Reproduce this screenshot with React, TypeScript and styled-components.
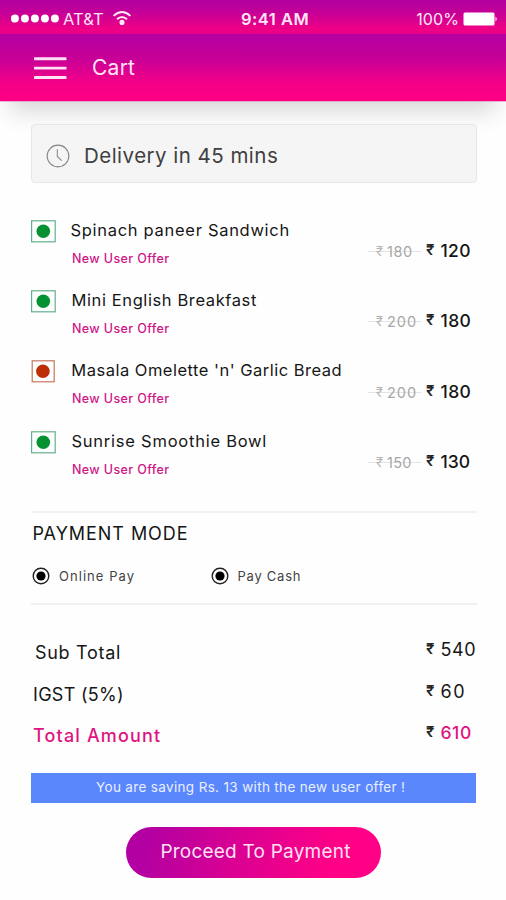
import React from "react";
import styled, { createGlobalStyle } from "styled-components";

const GlobalStyle = createGlobalStyle`
  *, *::before, *::after { box-sizing: border-box; }
  body {
    margin: 0;
    background: #fefefe;
    color: #161616;
    font-family: Inter, "Open Sans", sans-serif;
  }
`;

const Screen = styled.div`
  width: 506px;
  height: 900px;
  overflow: hidden;
  display: flex;
  flex-direction: column;
`;

/* One line of text: size, weight, tracking and an optional nudge to the right. */
const Label = styled.span<{ $size: number; $track?: number; $weight?: number; $color?: string; $indent?: number }>`
  font-size: ${(p) => p.$size}px;
  letter-spacing: ${(p) => p.$track ?? 0}px;
  font-weight: ${(p) => p.$weight ?? 400};
  color: ${(p) => p.$color ?? "inherit"};
  margin-left: ${(p) => p.$indent ?? 0}px;
  line-height: 24px;
  white-space: nowrap;
`;

const StatusBar = styled.div`
  height: 34px;
  flex: none;
  display: grid;
  grid-template-columns: 241px 1fr auto;
  align-items: center;
  padding: 4px 8px 0 0;
  color: #ffe6f6;
  background: linear-gradient(#b1009f 0%, #c40098 35%, #ee0085 85%, #e90086 100%);
`;

const Carrier = styled.div`
  display: flex;
  align-items: center;
  padding-left: 11px;
`;

const WifiIcon = styled.svg`
  width: 20px;
  height: 16px;
  margin: -2px 0 0 8px;
`;

const Battery = styled.div`
  display: flex;
  align-items: center;
  gap: 4px;
`;

const Header = styled.header`
  height: 67px;
  flex: none;
  display: flex;
  align-items: center;
  gap: 25px;
  padding-left: 34px;
  color: #ffe4f5;
  background: linear-gradient(#b400a1 0%, #c60098 35%, #f50087 75%, #ff0084 100%);
  box-shadow: 0 1px 0 rgba(235, 120, 185, 0.55), 0 20px 24px -10px rgba(0, 0, 0, 0.16);
  clip-path: inset(0 0 -60px 0);
`;

const Body = styled.main`
  display: flex;
  flex-direction: column;
  padding: 23px 30px 0 31px;
  position: relative;
`;

const DeliveryCard = styled.section`
  height: 59px;
  width: 446px;
  display: flex;
  align-items: center;
  gap: 14px;
  padding: 4px 0 0 14px;
  border: 1px solid #e6e7e7;
  border-radius: 4px;
  background: #f5f5f5;
`;

const ItemList = styled.ul`
  list-style: none;
  margin: 34.5px 0 12px;
  padding: 0;
  display: grid;
  grid-auto-rows: 70.4px;
`;

const Item = styled.li`
  display: grid;
  grid-template-columns: 40px 297px 58px 1fr;
  align-items: start;
`;

const FoodMark = styled.svg`
  width: 26px;
  height: 24px;
  margin-top: 2px;
`;

const ItemText = styled.div`
  display: flex;
  flex-direction: column;
  gap: 5px;
`;

const OldPrice = styled.div`
  display: flex;
  align-items: center;
  height: 24px;
  width: 53px;
  margin-top: 22.5px;
  padding-left: 8px;
  color: #a6a6a6;
  background: linear-gradient(#e4e4e4, #e4e4e4) 0 11px / 100% 1px no-repeat;
`;

const Price = styled.div`
  display: flex;
  align-items: center;
  margin-top: 21.5px;
`;

const RupeeSign = styled.span<{ $small?: boolean }>`
  width: ${(p) => (p.$small ? 11 : 14.5)}px;
  font-size: ${(p) => (p.$small ? 13 : 15)}px;
  font-weight: ${(p) => (p.$small ? 400 : 600)};
  line-height: 22px;
  padding-bottom: 2px;
  color: ${(p) => (p.$small ? "#b5b5b5" : "#252525")};
`;

const Divider = styled.hr`
  width: 446px;
  height: 2px;
  margin: 0;
  border: 0;
  background: #f1f1f1;
`;

const Payment = styled.section`
  height: 90px;
  display: flex;
  flex-direction: column;
  gap: 18.5px;
  padding: 8.5px 0 0 1px;
`;

const Options = styled.div`
  display: grid;
  grid-template-columns: 178.5px 1fr;
`;

const Option = styled.label`
  display: flex;
  align-items: center;
  gap: 9px;
`;

const Totals = styled.dl`
  margin: 0;
  padding: 32.9px 0 0 2px;
  display: grid;
  grid-auto-rows: 41.6px;
`;

const TotalRow = styled.div`
  display: grid;
  grid-template-columns: 393px 1fr;
  align-items: start;
`;

const Term = styled.dt`
  padding-top: 3.3px;
`;

const Amount = styled.dd`
  margin: 0;
  display: flex;
  align-items: center;
`;

const Saving = styled.p`
  width: 445px;
  height: 30px;
  margin: 10.5px 0 0;
  padding: 2px 0 0 65px;
  color: #e9efff;
  background: #5b87fd;
`;

const PayButton = styled.button`
  width: 255px;
  height: 51px;
  margin: 24px 0 0 95px;
  padding: 0 0 2px 4px;
  border: 0;
  border-radius: 26px;
  font-family: inherit;
  color: #ffe1f4;
  background: linear-gradient(105deg, #b200a2 8%, #d80093 42%, #ff0086 80%);
`;

type Entry = {
  name: string;
  track: number;
  indent: number;
  old: string;
  oldTrack: number;
  price: string;
  priceTrack: number;
  veg: boolean;
};

const items: Entry[] = [
  { name: "Spinach paneer Sandwich", track: 0.7, indent: -0.5, old: "180", oldTrack: 0.6, price: "120", priceTrack: 0.3, veg: true },
  { name: "Mini English Breakfast", track: 0.6, indent: 0.5, old: "200", oldTrack: 1, price: "180", priceTrack: 0.4, veg: true },
  { name: "Masala Omelette 'n' Garlic Bread", track: 0.49, indent: 0.3, old: "200", oldTrack: 1, price: "180", priceTrack: 0.4, veg: false },
  { name: "Sunrise Smoothie Bowl", track: 0.76, indent: 0.5, old: "150", oldTrack: 0.3, price: "130", priceTrack: 0, veg: true },
];

function Mark({ veg }: { veg: boolean }) {
  return (
    <FoodMark viewBox="0 0 26 24">
      <rect x={veg ? 0.6 : 1.2} y="0.8" width={veg ? 23.6 : 22} height="21" fill="#fcfffd" stroke={veg ? "#65b08b" : "#c9775e"} strokeWidth="1.2" />
      <circle cx={veg ? 12.3 : 11.9} cy="11.3" r="6.8" fill={veg ? "#069233" : "#bd2d08"} />
    </FoodMark>
  );
}

function Radio() {
  return (
    <svg width="18" height="18" viewBox="0 0 18 18">
      <circle cx="9" cy="9" r="7.8" fill="#fff" stroke="#222" strokeWidth="1.4" />
      <circle cx="9" cy="9" r="4.6" fill="#000" />
    </svg>
  );
}

export default function App() {
  return (
    <Screen>
      <GlobalStyle />
      <StatusBar>
        <Carrier>
          <svg width="48" height="10" viewBox="0 0 48 10" fill="#fff">
            {[4, 14, 24, 34, 44].map((x) => (
              <circle key={x} cx={x - 0.1} cy="4.6" r="4" />
            ))}
          </svg>
          <Label $size={16.5} $track={0.08} $indent={4}>AT&amp;T</Label>
          <WifiIcon viewBox="0 0 20 16" fill="none" stroke="#ffeaf8" strokeWidth="1.9">
            <path d="M1.6 5.9Q10 -1.9 18.4 5.9" />
            <path d="M5 9.3Q10 4.7 15 9.3" />
            <circle cx="10" cy="12.4" r="1.6" fill="#ffeaf8" />
          </WifiIcon>
        </Carrier>
        <Label $size={16.5} $weight={600} $track={0.5}>9:41 AM</Label>
        <Battery>
          <Label $size={16} $track={0.1}>100%</Label>
          <svg width="35" height="14" viewBox="0 0 35 14" fill="#fff">
            <rect x="0.5" y="0.5" width="31" height="13" rx="1.5" />
            <path d="M32.5 4.5Q35 7 32.5 9.5Z" />
          </svg>
        </Battery>
      </StatusBar>
      <Header>
        <svg width="33" height="24" viewBox="0 0 33 24" fill="#ffe0f4">
          <rect x="0" y="1.3" width="32.5" height="2.9" rx="0.6" />
          <rect x="0" y="10.7" width="32.5" height="2.9" rx="0.6" />
          <rect x="0" y="20.1" width="32.5" height="2.9" rx="0.6" />
        </svg>
        <Label $size={21} $track={0.25}>Cart</Label>
      </Header>
      <Body>
        <DeliveryCard>
          <svg width="24" height="24" viewBox="0 0 25 25" fill="none" stroke="#858585" strokeWidth="1.1">
            <circle cx="12.5" cy="12.5" r="11.3" />
            <path d="M11.8 5.5V13L16.3 17.3" />
          </svg>
          <Label $size={20.5} $track={0.47} $color="#404040">Delivery in 45 mins</Label>
        </DeliveryCard>
        <ItemList>
          {items.map((it) => (
            <Item key={it.name}>
              <Mark veg={it.veg} />
              <ItemText>
                <Label $size={16.5} $track={it.track} $indent={it.indent}>{it.name}</Label>
                <Label $size={12.5} $weight={500} $track={0.38} $indent={1} $color="#cf1687">New User Offer</Label>
              </ItemText>
              <OldPrice>
                <RupeeSign $small>₹</RupeeSign>
                <Label $size={14.5} $track={it.oldTrack}>{it.old}</Label>
              </OldPrice>
              <Price>
                <RupeeSign>₹</RupeeSign>
                <Label $size={17.5} $weight={500} $track={it.priceTrack}>{it.price}</Label>
              </Price>
            </Item>
          ))}
        </ItemList>
        <Divider />
        <Payment>
          <Label $size={18} $track={0.95} $indent={0.5}>PAYMENT MODE</Label>
          <Options>
            <Option>
              <Radio />
              <Label $size={13} $track={1.05} $color="#444">Online Pay</Label>
            </Option>
            <Option>
              <Radio />
              <Label $size={13} $track={0.75} $color="#444">Pay Cash</Label>
            </Option>
          </Options>
        </Payment>
        <Divider />
        <Totals>
          <TotalRow>
            <Term><Label $size={18} $track={0.7} $indent={2}>Sub Total</Label></Term>
            <Amount><RupeeSign>₹</RupeeSign><Label $size={18} $track={0.6}>540</Label></Amount>
          </TotalRow>
          <TotalRow>
            <Term><Label $size={18} $track={0.3}>IGST (5%)</Label></Term>
            <Amount><RupeeSign>₹</RupeeSign><Label $size={18} $track={1.6}>60</Label></Amount>
          </TotalRow>
          <TotalRow>
            <Term><Label $size={18} $weight={500} $track={1.16} $color="#e0147f">Total Amount</Label></Term>
            <Amount><RupeeSign>₹</RupeeSign><Label $size={17.5} $weight={500} $track={0.6} $color="#e0147f">610</Label></Amount>
          </TotalRow>
        </Totals>
        <Saving>
          <Label $size={13.5} $track={0.34}>You are saving Rs. 13 with the new user offer !</Label>
        </Saving>
        <PayButton>
          <Label $size={19} $track={0.22}>Proceed To Payment</Label>
        </PayButton>
      </Body>
    </Screen>
  );
}
